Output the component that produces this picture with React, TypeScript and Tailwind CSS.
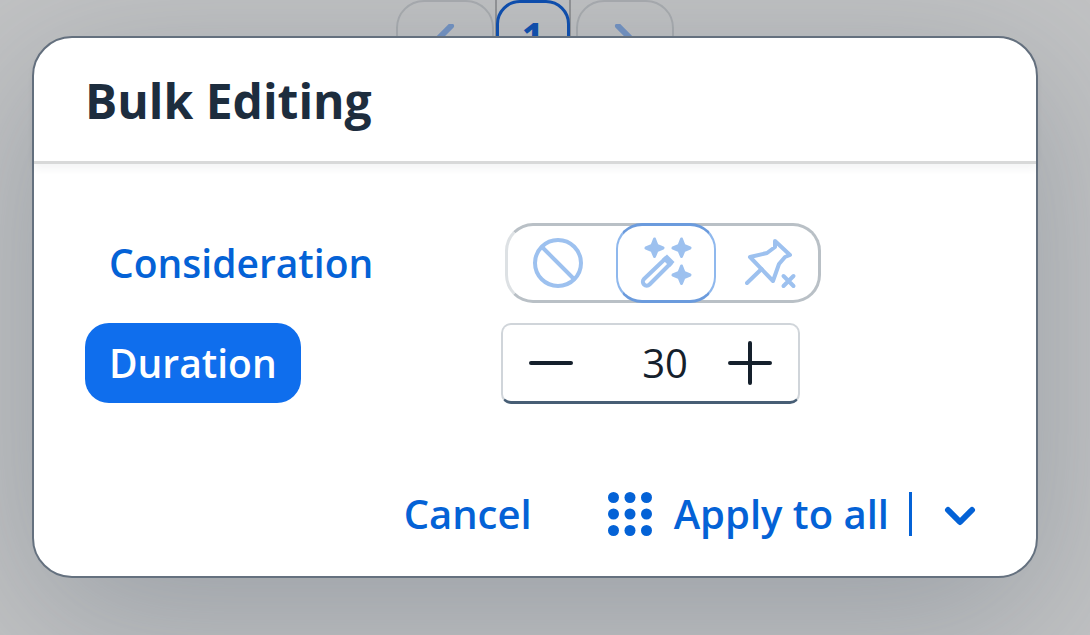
import { useState } from "react"
import clsx from "clsx"

const modes = [
  { id: "exclude", label: "Exclude", size: "w-[108px] pr-2", icon: ExcludeIcon },
  { id: "auto", label: "Automatic", size: "w-[100px]", icon: WandIcon },
  { id: "unpin", label: "Unpin", size: "w-[102px] pl-2", icon: UnpinIcon },
]

function ExcludeIcon() {
  return (
    <svg viewBox="0 0 52 52" className="size-[52px]" fill="none" stroke="currentColor" strokeWidth="4">
      <circle cx="26" cy="26" r="23" />
      <path d="M10 10 42 42" />
    </svg>
  )
}

function WandIcon() {
  return (
    <svg viewBox="0 0 52 52" className="size-[52px]" fill="none" stroke="currentColor" strokeWidth="4" strokeLinejoin="round">
      <path d="M26 21 31 26 9.500 47.500a3.700 3.700 0 0 1-5.500-5.500Z" />
      <path d="M22 22 27 17.500 34.500 25 30 30 26 26Z" fill="currentColor" stroke="none" />
      <g fill="currentColor" strokeWidth="3">
        <path d="M14.500 2 17 8.500 23 11 17 13.500 14.500 19.500 12 13.500 6 11 12 8.500Z" />
        <path d="M41.500 2 44 8.500 50 11 44 13.500 41.500 19.500 39 13.500 33 11 39 8.500Z" />
        <path d="M41.500 29 44 35.500 50 38 44 40.500 41.500 46.500 39 40.500 33 38 39 35.500Z" />
      </g>
    </svg>
  )
}

function UnpinIcon() {
  return (
    <svg viewBox="0 0 52 52" className="size-[52px]" fill="none" stroke="currentColor" strokeWidth="4" strokeLinecap="round" strokeLinejoin="round">
      <path d="M30 4 45 18 40 20 34 27 28 44 5 20 22 16 30 10Z" />
      <path d="M16.500 32 2 46" />
      <path d="M38.500 39 48.500 49M48.500 39 38.500 49" />
    </svg>
  )
}

function GridIcon() {
  return (
    <svg viewBox="0 0 44 44" className="size-[44px]" fill="currentColor">
      {[5.5, 22, 38.5].map((y) =>
        [5.5, 22, 38.5].map((x) => <circle key={`${x}-${y}`} cx={x} cy={y} r="5.5" />),
      )}
    </svg>
  )
}

function ArrowIcon({ d }: { d: string }) {
  return (
    <svg viewBox="0 0 32 32" className="size-8" fill="none" stroke="currentColor" strokeWidth="6" strokeLinecap="round" strokeLinejoin="round">
      <path d={d} />
    </svg>
  )
}

function Pagination() {
  return (
    <nav aria-label="Pages" className="flex h-20 justify-center gap-px text-[#0a4db0]">
      <button aria-label="Previous page" className="flex w-[98px] items-center justify-center rounded-[28px] border-2 border-[#aaadb0] text-[#7393c4]">
        <ArrowIcon d="M22 2 7 17 22 32" />
      </button>
      <div className="flex border-x-2 border-[#939496]">
        <button aria-current="page" className="-mx-px w-[74px] rounded-[24px] border-3 border-[#0a4db0] text-[40px] font-bold leading-[66px]">
          <span className="block h-full">1</span>
        </button>
      </div>
      <button aria-label="Next page" className="ml-1 flex w-[98px] items-center justify-center rounded-[28px] border-2 border-[#aaadb0] text-[#7393c4]">
        <ArrowIcon d="M9 2 24 17 9 32" />
      </button>
    </nav>
  )
}

export default function App() {
  const [mode, setMode] = useState("auto")
  const [duration, setDuration] = useState(30)

  return (
    <div className="min-h-screen overflow-hidden bg-[#c2c3c4] pr-[52px] pb-14 pl-8 font-['Open_Sans','Noto_Sans',sans-serif]">
      <Pagination />

      <div
        role="dialog"
        aria-labelledby="dialog-title"
        className="relative -mt-11 rounded-[40px] border-2 border-[#65717f] bg-white shadow-[0_40px_160px_rgba(80,95,110,0.36)]"
      >
        <header className="rounded-t-[38px] border-b-3 border-[#d8d9d9] px-[51px] pt-[31px] pb-7 shadow-[0_4px_8px_rgba(34,53,72,0.06)]">
          <h1 id="dialog-title" className="text-[48px] leading-[64px] font-bold text-[#1d2d3e]">
            Bulk Editing
          </h1>
        </header>

        <div className="grid grid-cols-[416px_1fr] gap-y-5 px-[51px] pt-[59px] text-[39px]">
          <div>
            <button className="h-20 px-6 font-semibold text-[#0462d6]">Consideration</button>
          </div>
          <div
            role="group"
            aria-label="Consideration"
            className="ml-1 flex h-20 justify-self-start rounded-[28px] border-3 border-[#b9c0c6] border-l-[#dde1e4]"
          >
            {modes.map((item) => (
              <button
                key={item.id}
                aria-label={item.label}
                aria-pressed={mode === item.id}
                onClick={() => setMode(item.id)}
                className={clsx(
                  "-my-[3px] flex items-center justify-center text-[#9dc1ef]",
                  item.size,
                  mode === item.id && "rounded-[26px] border-x-2 border-y-3 border-x-[#8fb8ed] border-y-[#6b9bdd]",
                )}
              >
                <item.icon />
              </button>
            ))}
          </div>

          <div>
            <button className="h-20 rounded-[24px] bg-[#0f6eed] px-6 font-semibold text-white">Duration</button>
          </div>
          <div className="flex h-[81px] w-[299px] justify-self-start rounded-[10px] border-2 border-b-3 border-[#d0d5da] border-b-[#475e75] text-[#15202c]">
            <button
              aria-label="Decrease duration"
              onClick={() => setDuration(duration - 1)}
              className="flex w-24 shrink-0 items-center justify-center"
            >
              <svg viewBox="0 0 44 44" className="size-[44px]" stroke="currentColor" strokeWidth="4" strokeLinecap="round">
                <path d="M2 22H42" />
              </svg>
            </button>
            <input
              aria-label="Duration"
              inputMode="numeric"
              value={duration}
              onChange={(e) => setDuration(Number(e.target.value) || 0)}
              className="min-w-0 flex-1 pr-3.5 text-right text-[40px] outline-none"
            />
            <button
              aria-label="Increase duration"
              onClick={() => setDuration(duration + 1)}
              className="flex w-24 shrink-0 items-center justify-center"
            >
              <svg viewBox="0 0 44 44" className="size-[44px]" stroke="currentColor" strokeWidth="4" strokeLinecap="round">
                <path d="M2 22H42M22 2V42" />
              </svg>
            </button>
          </div>
        </div>

        <footer className="flex justify-end px-9 pt-[70px] pb-[22px] text-[40px] font-semibold text-[#0462d6]">
          <button className="h-20 px-6">Cancel</button>
          <button className="ml-8 flex h-20 items-center gap-[22px] px-5">
            <GridIcon />
            Apply to all
          </button>
          <span className="h-11 w-[3px] self-center bg-current" />
          <button aria-label="More apply options" className="flex h-20 w-[88px] items-center justify-center pt-1 pl-2">
            <ArrowIcon d="M4 10 16 22 28 10" />
          </button>
        </footer>
      </div>
    </div>
  )
}
